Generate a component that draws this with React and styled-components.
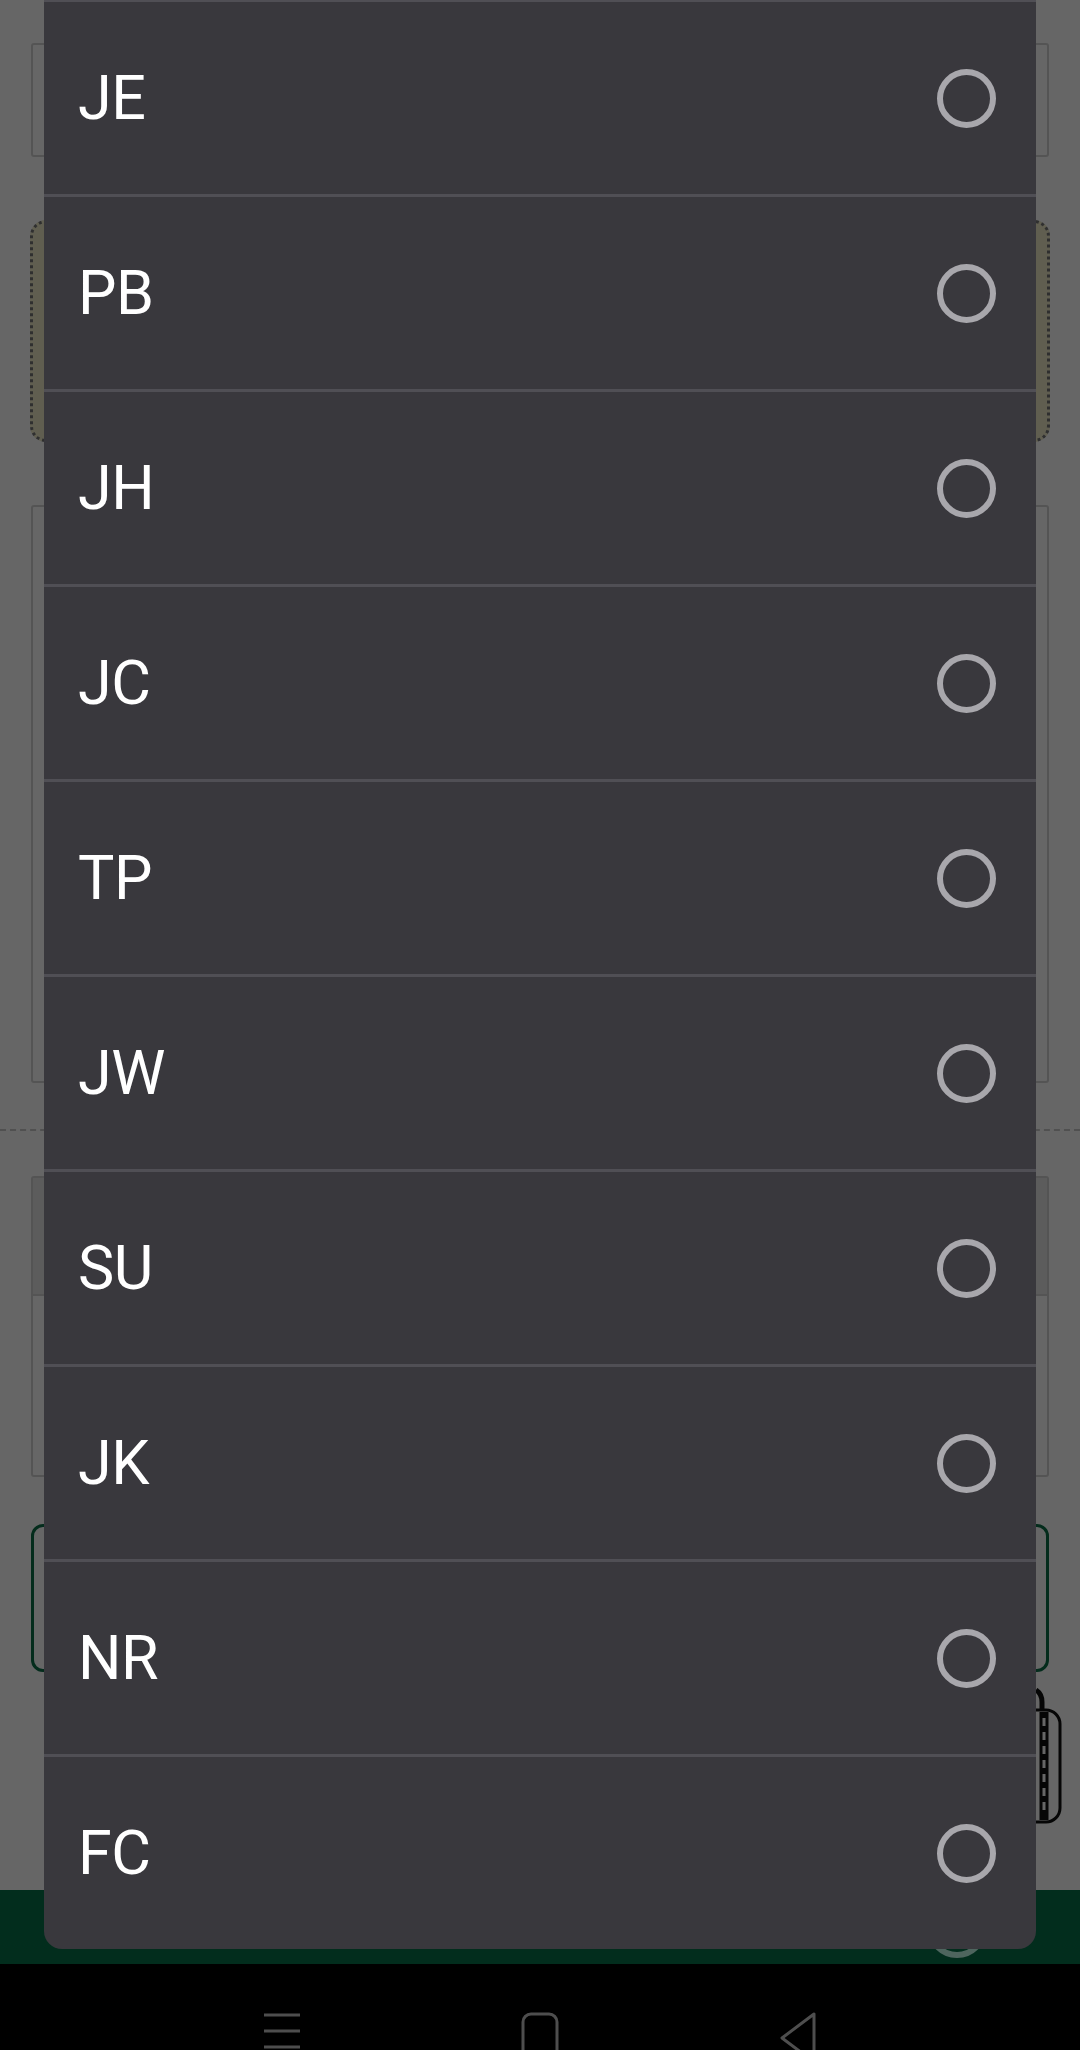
import React from "react";
import styled, { createGlobalStyle } from "styled-components";

const GlobalStyle = createGlobalStyle`
  html, body {
    margin: 0;
    padding: 0;
    background: #000;
  }
  body {
    font-family: Roboto, "Noto Sans", "Liberation Sans", sans-serif;
  }
`;

const Screen = styled.div`
  position: relative;
  width: 1080px;
  height: 2050px;
  overflow: hidden;
  background: #ffffff;
  display: flex;
  flex-direction: column;
`;

/* the form that sits behind the dimmed backdrop */
const Page = styled.div`
  flex: 1;
  display: flex;
  flex-direction: column;
  padding: 43px 31px 0;
  box-sizing: border-box;
`;

const Field = styled.div`
  height: ${(p) => p.h}px;
  margin-bottom: ${(p) => p.mb || 0}px;
  box-sizing: border-box;
  border: 2px solid #d2d2d2;
  border-radius: 3px;
  display: flex;
  flex-direction: column;
`;

const FieldHead = styled.div`
  height: 116px;
  background: #e6e6e6;
  border-bottom: 2px solid #d2d2d2;
`;

const UploadBox = styled.div`
  height: 222px;
  margin: 0 -1px 63px;
  box-sizing: border-box;
  background: #efeac9;
  border: 3px dotted #777;
  border-radius: 16px;
`;

const DashedRule = styled.div`
  height: 0;
  margin: 0 -31px 45px;
  border-top: 2px dashed #c8c8c8;
`;

const OutlineButton = styled.div`
  height: 148px;
  box-sizing: border-box;
  border: 3px solid #0b6e46;
  border-radius: 12px;
`;

const ActionBar = styled.div`
  height: 74px;
  background: #05704a;
`;

const NavBar = styled.div`
  height: 86px;
  background: #000;
  display: flex;
  justify-content: center;
  gap: 220px;
  padding-top: 48px;
  box-sizing: border-box;
`;

const NavIcon = styled.svg`
  width: 38px;
  height: 52px;
  flex: none;
  color: #c4c4c4;
`;

const Handle = styled.svg`
  position: absolute;
  top: 1688px;
  right: 18px;
  width: 80px;
  height: 136px;
`;

const Backdrop = styled.div`
  position: absolute;
  inset: 0;
  background: rgba(0, 0, 0, 0.6);
`;

const GhostRing = styled.div`
  position: absolute;
  left: 927px;
  top: 1898px;
  width: 60px;
  height: 60px;
  box-sizing: border-box;
  border: 6px solid rgba(170, 170, 176, 0.45);
  border-radius: 50%;
`;

const Sheet = styled.div`
  position: absolute;
  top: -1px;
  left: 44px;
  width: 992px;
  background: #39383d;
  border-radius: 0 0 18px 18px;
  overflow: hidden;
`;

const Row = styled.div`
  height: 195px;
  box-sizing: border-box;
  border-top: 3px solid #504f55;
  display: flex;
  align-items: center;
  justify-content: space-between;
  padding: 0 40px 0 34px;
`;

const Label = styled.span`
  font-size: 61px;
  line-height: 1;
  color: #ffffff;
  letter-spacing: -0.5px;
`;

const Radio = styled.span`
  width: 59px;
  height: 59px;
  box-sizing: border-box;
  border: 6px solid #a8a7ac;
  border-radius: 50%;
`;

const options = ["JE", "PB", "JH", "JC", "TP", "JW", "SU", "JK", "NR", "FC"];

export default function App() {
  return (
    <>
      <GlobalStyle />
      <Screen>
        <Page>
          <Field h={114} mb={63} />
          <UploadBox />
          <Field h={578} mb={46} />
          <DashedRule />
          <Field h={301} mb={47}>
            <FieldHead />
          </Field>
          <OutlineButton />
        </Page>
        <ActionBar />
        <NavBar>
          <NavIcon viewBox="0 0 38 52">
            <g stroke="currentColor" strokeWidth="3">
              <line x1="1" y1="3" x2="37" y2="3" />
              <line x1="1" y1="19" x2="37" y2="19" />
              <line x1="1" y1="35" x2="37" y2="35" />
            </g>
          </NavIcon>
          <NavIcon viewBox="0 0 38 52">
            <rect x="2" y="2" width="34" height="46" rx="8" fill="none" stroke="currentColor" strokeWidth="3" />
          </NavIcon>
          <NavIcon viewBox="0 0 38 52">
            <path d="M35 2 L35 50 L3 26 Z" fill="none" stroke="currentColor" strokeWidth="3" strokeLinejoin="round" />
          </NavIcon>
        </NavBar>

        {/* floating drag handle, mostly hidden by the sheet */}
        <Handle viewBox="0 0 80 136">
          <path d="M54 2 q6 4 6 12 v10" fill="none" stroke="#111" strokeWidth="5" />
          <rect x="4" y="22" width="74" height="112" rx="14" fill="#fff" stroke="#111" strokeWidth="3" />
          <line x1="62" y1="24" x2="62" y2="132" stroke="#111" strokeWidth="9" />
          <line x1="62" y1="30" x2="62" y2="128" stroke="#fff" strokeWidth="3" strokeDasharray="8 6" />
        </Handle>

        <Backdrop />
        <GhostRing />

        <Sheet>
          {options.map((code) => (
            <Row key={code}>
              <Label>{code}</Label>
              <Radio />
            </Row>
          ))}
        </Sheet>
      </Screen>
    </>
  );
}
